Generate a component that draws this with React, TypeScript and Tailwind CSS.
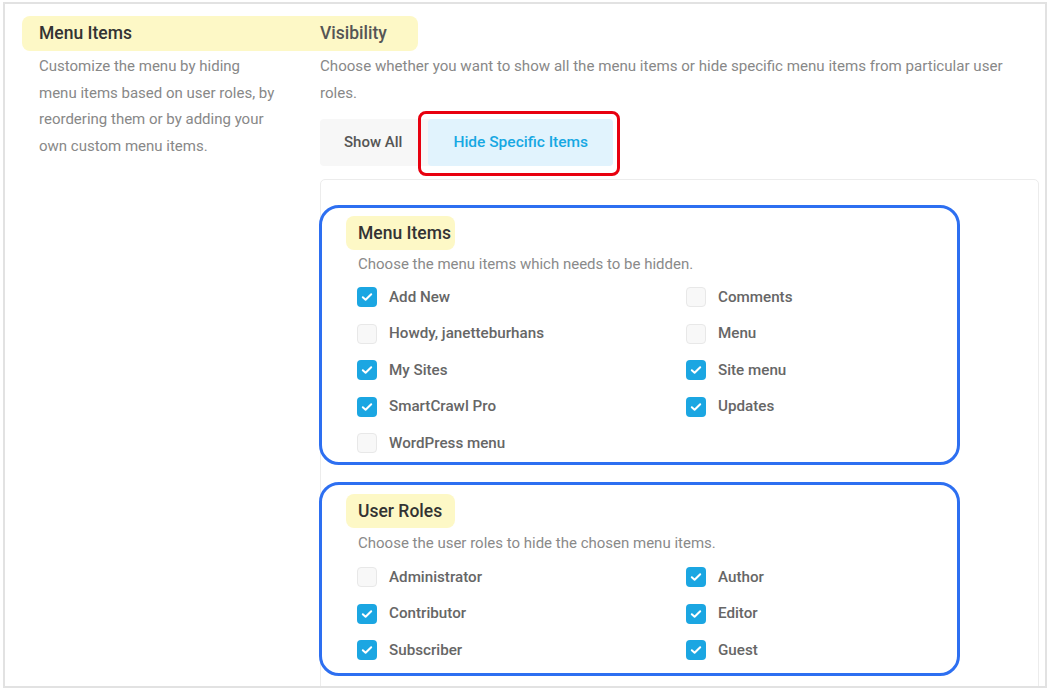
import React from "react";

const font = { fontFamily: "Roboto, 'Noto Sans', Arial, sans-serif" };

function Check({ checked }: { checked: boolean }) {
  if (checked) {
    return (
      <span className="flex h-[20px] w-[20px] shrink-0 items-center justify-center rounded-[4px] bg-[#1ba6e2]">
        <svg width="12" height="10" viewBox="0 0 12 10" fill="none">
          <path d="M1.8 5.2 L4.6 7.8 L10.2 2.2" stroke="white" strokeWidth="2" strokeLinecap="round" strokeLinejoin="round" />
        </svg>
      </span>
    );
  }
  return <span className="h-[20px] w-[20px] shrink-0 rounded-[4px] border border-[#e8e8e8] bg-[#f8f8f8]" />;
}

function Item({ label, checked }: { label: string; checked: boolean }) {
  return (
    <div className="flex h-[36.5px] items-center gap-[12px]">
      <Check checked={checked} />
      <span className="text-[15.2px] font-medium text-[#666]">{label}</span>
    </div>
  );
}

function Section({
  title,
  sub,
  left,
  right,
  height,
  gapTop,
  subGap,
  rowGap,
}: {
  title: string;
  sub: string;
  left: [string, boolean][];
  right: [string, boolean][];
  height: string;
  gapTop: string;
  subGap: string;
  rowGap: string;
}) {
  return (
    <div className={`ml-[-2px] w-[641px] rounded-[20px] border-[3px] border-[#2d6ff1] pl-[24px] ${height} ${gapTop}`}>
      <div className="flex h-[34px] w-[109px] items-center rounded-[8px] bg-[#fdf8c6] pl-[12px] text-[17.5px] font-medium text-[#333]">
        {title}
      </div>
      <div className={`h-[20px] pl-[12px] text-[15px] leading-[20px] text-[#8a8a8a] ${subGap}`}>{sub}</div>
      <div className={`flex pl-[11px] ${rowGap}`}>
        <div className="w-[329px]">
          {left.map(([l, c]) => (
            <Item key={l} label={l} checked={c} />
          ))}
        </div>
        <div>
          {right.map(([l, c]) => (
            <Item key={l} label={l} checked={c} />
          ))}
        </div>
      </div>
    </div>
  );
}

export default function App() {
  return (
    <div className="h-[691px] w-[1050px] bg-white" style={font}>
      <div className="relative ml-[3px] pt-[2px]">
        <div className="h-[686px] w-[1044px] overflow-hidden border-[2px] border-[#e2e2e2] bg-white">
          {/* header */}
          <div className="ml-[17px] mt-[12px] flex h-[35px] w-[396px] items-center rounded-[8px] bg-[#fdf8c6] pl-[17px]">
            <div className="w-[281px] text-[17.5px] font-medium text-[#333]">Menu Items</div>
            <div className="text-[17.5px] font-medium text-[#555]">Visibility</div>
          </div>
          <div className="mt-[2px] flex">
            <div className="ml-[34px] mr-[39px] w-[242px] text-[15px] leading-[26.7px] text-[#888]">
              Customize the menu by hiding menu items based on user roles, by reordering them or by adding your own custom menu items.
            </div>
            <div className="flex-1">
              <div className="w-[700px] text-[15.1px] leading-[26.7px] text-[#888]">
                Choose whether you want to show all the menu items or hide specific menu items from particular user roles.
              </div>
              <div className="mt-[12.6px] flex h-[47px] w-fit items-stretch rounded-[4px] bg-[#f7f7f7]">
                <div className="flex items-center px-[24px] text-[15px] font-medium text-[#555]">Show All</div>
                <div className="relative ml-[2px] flex items-center rounded-[4px] bg-[#e1f3fd] px-[25px] text-[15.5px] font-medium text-[#17a8e3]">
                  Hide Specific Items
                  <div className="absolute -bottom-[10px] -left-[10px] -right-[7px] -top-[8px] rounded-[8px] border-[3px] border-[#e8000f]" />
                </div>
              </div>
              <div className="mt-[13px] h-[540px] w-[719px] rounded-t-[5px] border border-[#ececec] pt-[25px]">
                <Section
                  title="Menu Items"
                  sub="Choose the menu items which needs to be hidden."
                  height="h-[260px]"
                  gapTop="pt-[8px]"
                  subGap="mt-[4px]"
                  rowGap="mt-[5px]"
                  left={[
                    ["Add New", true],
                    ["Howdy, janetteburhans", false],
                    ["My Sites", true],
                    ["SmartCrawl Pro", true],
                    ["WordPress menu", false],
                  ]}
                  right={[
                    ["Comments", false],
                    ["Menu", false],
                    ["Site menu", true],
                    ["Updates", true],
                  ]}
                />
                <div className="h-[17px]" />
                <Section
                  title="User Roles"
                  sub="Choose the user roles to hide the chosen menu items."
                  height="h-[194px]"
                  gapTop="pt-[9px]"
                  subGap="mt-[5px]"
                  rowGap="mt-[6px]"
                  left={[
                    ["Administrator", false],
                    ["Contributor", true],
                    ["Subscriber", true],
                  ]}
                  right={[
                    ["Author", true],
                    ["Editor", true],
                    ["Guest", true],
                  ]}
                />
              </div>
            </div>
          </div>
        </div>
      </div>
    </div>
  );
}
